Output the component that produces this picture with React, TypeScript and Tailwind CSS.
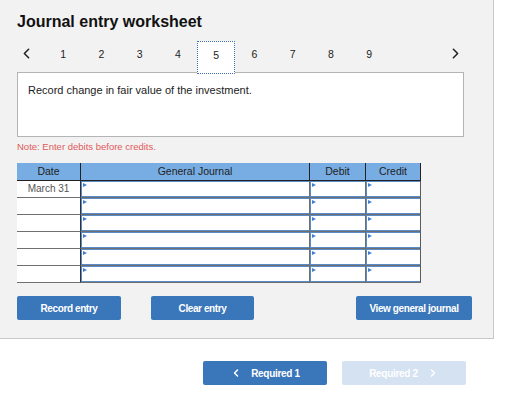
import { ChevronLeft, ChevronRight } from "lucide-react";

const tabs = [1, 2, 3, 4, 5, 6, 7, 8, 9];
const rows = ["March 31", "", "", "", "", ""];

function InputCell({ last }: { last?: boolean }) {
  return (
    <div
      className={
        "h-[17px] bg-white border-b border-[#6f6f6f] " +
        (last ? "border-r border-r-[#5b5b5b]" : "border-r border-r-[#6f6f6f]")
      }
    >
      <div className="relative h-full border-l border-t border-b border-[#5a8bc9]">
        <span className="absolute left-[1px] top-[1px] w-0 h-0 border-y-[2.5px] border-y-transparent border-l-[4px] border-l-[#3f7fd0]" />
      </div>
    </div>
  );
}

export default function App() {
  return (
    <div
      className="w-[515px] h-[416px] bg-white text-[#222]"
      style={{ fontFamily: '"Liberation Sans", Arial, sans-serif' }}
    >
      <div className="w-[494px] h-[339px] bg-[#f2f2f2] border-r border-b border-[#c8c8c8] pl-[17px] pt-[12px]">
        <h1 className="text-[16px] leading-[20px] font-bold text-[#111]">
          Journal entry worksheet
        </h1>

        <div className="flex items-start h-[31px] mt-[9px] w-[447px]">
          <div className="w-[27px] h-[32px] flex justify-start pt-[4px] pl-[1px]">
            <ChevronLeft size={17} strokeWidth={2.2} className="text-[#222]" />
          </div>
          {tabs.map((t) => (
            <div
              key={t}
              className={
                "w-[38.25px] h-[33px] flex justify-center pt-[6px] text-[10.5px] leading-[14px] " +
                (t === 5
                  ? "relative z-10 bg-white border border-dotted border-[#3b6fb6]"
                  : "")
              }
            >
              {t}
            </div>
          ))}
          <div className="flex-1 flex justify-end pt-[4px]">
            <ChevronRight size={17} strokeWidth={2.2} className="text-[#222]" />
          </div>
        </div>

        <div className="w-[447px] h-[65px] bg-white border border-[#b4b4b4] pl-[10px] pt-[10px]">
          <p className="text-[11px] leading-[14px] text-[#222]">
            Record change in fair value of the investment.
          </p>
        </div>

        <p className="mt-[4px] text-[9.5px] leading-[12px] text-[#e05a5a]">
          Note: Enter debits before credits.
        </p>

        <div className="mt-[10px] w-[404px]">
          <div className="grid grid-cols-[64px_229px_56px_55px] h-[18px] bg-[#78ade3] border-b border-[#222] text-[10.5px] leading-[17px] text-[#222]">
            <div className="text-center border-r border-[#222]">Date</div>
            <div className="text-center border-r border-[#222]">General Journal</div>
            <div className="text-center border-r border-[#222]">Debit</div>
            <div className="text-center border-r border-[#222]">Credit</div>
          </div>
          {rows.map((d, i) => (
            <div key={i} className="grid grid-cols-[64px_229px_56px_55px]">
              <div className="h-[17px] bg-white border-b border-[#707070] border-r border-r-[#333] text-[10px] leading-[15px] text-center text-[#555]">
                {d}
              </div>
              <InputCell />
              <InputCell />
              <InputCell last />
            </div>
          ))}
        </div>

        <div className="flex mt-[13px] h-[24px] text-[10px] font-bold text-white tracking-[-0.4px]">
          <button className="w-[104px] h-[24px] bg-[#3a76ba] rounded-[2px]">
            Record entry
          </button>
          <button className="ml-[30px] w-[103px] h-[24px] bg-[#3a76ba] rounded-[2px]">
            Clear entry
          </button>
          <button className="ml-[102px] w-[116px] h-[24px] bg-[#3a76ba] rounded-[2px]">
            View general journal
          </button>
        </div>
      </div>

      <div className="flex mt-[22px] pl-[203px] gap-[15px] text-[10px] font-bold text-white tracking-[-0.3px]">
        <button className="w-[124px] h-[24px] bg-[#3a76ba] rounded-[2px] flex items-center justify-center gap-[9px]">
          <ChevronLeft size={12} strokeWidth={3} />
          <span>Required 1</span>
        </button>
        <button className="w-[124px] h-[24px] bg-[#d5e2f2] rounded-[2px] flex items-center justify-center gap-[9px]">
          <span>Required 2</span>
          <ChevronRight size={12} strokeWidth={3} />
        </button>
      </div>
    </div>
  );
}
